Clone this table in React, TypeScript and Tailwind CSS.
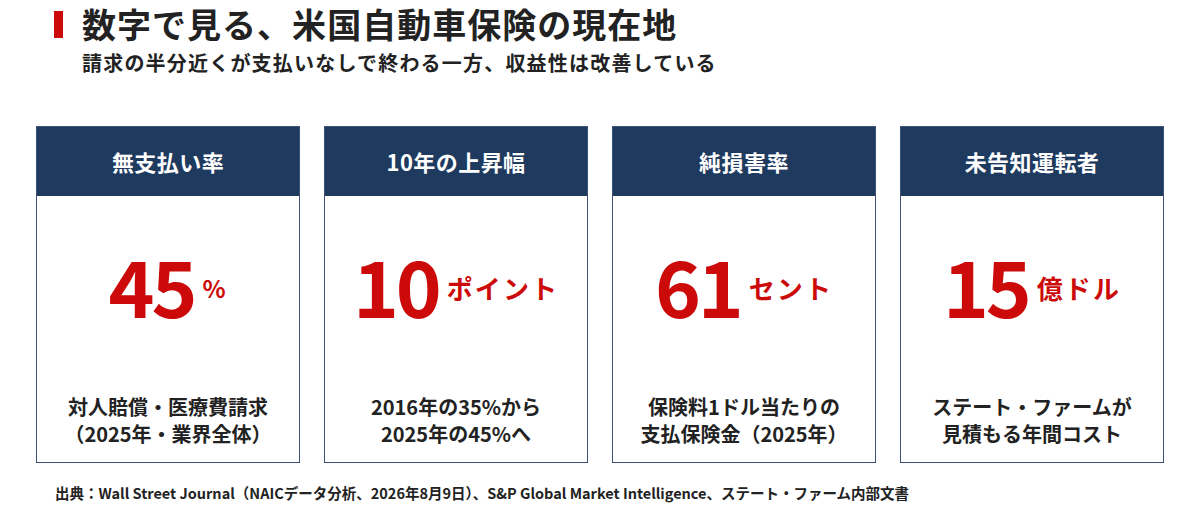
import { type FC } from "react";

const STATS = [
    { label: "無支払い率", value: "45", unit: "%", unitSize: "text-[24px]", note: ["対人賠償・医療費請求", "（2025年・業界全体）"] },
    { label: "10年の上昇幅", value: "10", unit: "ポイント", unitSize: "text-[26px]", note: ["2016年の35%から", "2025年の45%へ"] },
    { label: "純損害率", value: "61", unit: "セント", unitSize: "text-[26px]", note: ["保険料1ドル当たりの", "支払保険金（2025年）"] },
    { label: "未告知運転者", value: "15", unit: "億ドル", unitSize: "text-[26px]", note: ["ステート・ファームが", "見積もる年間コスト"] },
];

const App: FC = () => {
    return (
        <div
            className="w-[1200px] h-[518px] bg-white text-[#222] overflow-hidden"
            style={{ fontFamily: '"Noto Sans CJK JP", "Noto Sans", sans-serif' }}
        >
            <header className="pl-[54px] pt-[3px]">
                <div className="flex items-center gap-[19px]">
                    <span className="w-[9px] h-[27px] bg-[#cc0a0a]" />
                    <h1 className="text-[34px] font-bold leading-[42px] tracking-[0.03em]">
                        数字で見る、米国自動車保険の現在地
                    </h1>
                </div>
                <p className="pl-[28px] mt-[4px] text-[20px] font-semibold leading-[28px] tracking-[0.06em]">
                    請求の半分近くが支払いなしで終わる一方、収益性は改善している
                </p>
            </header>

            <div className="grid grid-cols-4 gap-[24px] px-[36px] mt-[49px]">
                {STATS.map((s) => (
                    <div key={s.label} className="h-[337px] flex flex-col border border-[#3d5478] bg-white">
                        <div className="h-[69px] bg-[#1f3a5f] flex items-center justify-center">
                            <span className="text-white text-[22px] font-semibold tracking-[0.02em]">{s.label}</span>
                        </div>
                        <div className="flex-1 flex flex-col items-center">
                            <div className="mt-[48px] h-[80px] flex items-center gap-[8px] text-[#cc0a0a]">
                                <span className="text-[78px] font-bold leading-none tracking-[-0.04em]">{s.value}</span>
                                <span className={`${s.unitSize} font-bold leading-none mt-[8px] tracking-[0.08em]`}>
                                    {s.unit}
                                </span>
                            </div>
                            <div className="mt-auto mb-[15px] text-center text-[20px] font-semibold leading-[27px]">
                                {s.note.map((line) => (
                                    <p key={line}>{line}</p>
                                ))}
                            </div>
                        </div>
                    </div>
                ))}
            </div>

            <p className="pl-[55px] mt-[20px] text-[14.5px] font-semibold leading-[20px]">
                出典：Wall Street Journal（NAICデータ分析、2026年8月9日）、S&amp;P Global Market Intelligence、ステート・ファーム内部文書
            </p>
        </div>
    );
};

export default App;
